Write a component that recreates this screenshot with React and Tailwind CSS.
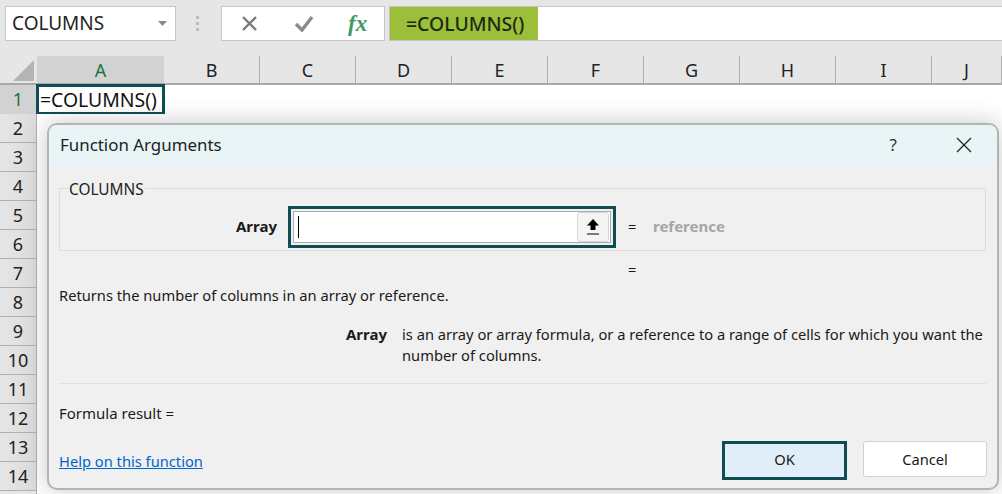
import React from 'react';

const columns = [
  { label: 'A', width: 'w-[127px]', active: true },
  { label: 'B', width: 'w-[96px]' },
  { label: 'C', width: 'w-[96px]' },
  { label: 'D', width: 'w-[96px]' },
  { label: 'E', width: 'w-[96px]' },
  { label: 'F', width: 'w-[96px]' },
  { label: 'G', width: 'w-[96px]' },
  { label: 'H', width: 'w-[96px]' },
  { label: 'I', width: 'w-[96px]' },
  { label: 'J', width: 'w-[70px]' },
];

const rows = [2, 3, 4, 5, 6, 7, 8, 9, 10, 11, 12, 13, 14];

const FormulaBar = () => (
  <div className="flex h-[56px] shrink-0 items-start bg-[#e6e6e6] pt-[6px]">
    <div className="ml-[5px] flex h-[35px] w-[171px] items-center justify-between border border-[#c6c6c6] bg-white pl-[6px] pr-[8px]">
      <span className="text-[19px] text-[#222]">COLUMNS</span>
      <svg width="9" height="5" viewBox="0 0 9 5"><path d="M0 0h9L4.5 5z" fill="#8a8a8a" /></svg>
    </div>
    <div className="ml-[20px] mr-[22px] flex h-[35px] flex-col justify-center gap-[3px]">
      <div className="h-[3px] w-[3px] bg-[#bdbdbd]" />
      <div className="h-[3px] w-[3px] bg-[#bdbdbd]" />
      <div className="h-[3px] w-[3px] bg-[#bdbdbd]" />
    </div>
    <div className="flex h-[35px] w-[164px] items-center border border-[#c6c6c6] bg-white">
      <svg className="ml-[19px]" width="17" height="17" viewBox="0 0 17 17">
        <path d="M2 2l13 13M15 2L2 15" stroke="#7a7a7a" strokeWidth="2.4" fill="none" />
      </svg>
      <svg className="ml-[36px]" width="20" height="17" viewBox="0 0 20 17">
        <path d="M2 9l6 6L18 2" stroke="#8a8a8a" strokeWidth="3.4" fill="none" />
      </svg>
      <span className="ml-[34px] font-['Liberation_Serif',serif] text-[23px] font-bold italic leading-[28px] text-[#3f9a66]">fx</span>
    </div>
    <div className="ml-[4px] flex h-[35px] flex-1 border border-r-0 border-[#c6c6c6] bg-white">
      <div className="flex w-[148px] items-center bg-[#9bbf3b] pl-[16px] text-[19.4px] font-medium text-[#1d2a10]">=COLUMNS()</div>
    </div>
  </div>
);

const ColumnHeaders = () => (
  <div className="flex h-[29px] shrink-0 border-b-2 border-[#a8a8a8] bg-[#e6e6e6]">
    <div className="flex w-[37px] items-end justify-end pb-[2px] pr-[3px]">
      <svg width="21" height="21" viewBox="0 0 21 21"><path d="M21 0v21H0z" fill="#b4b4b4" /></svg>
    </div>
    {columns.map((col) => (
      <div
        key={col.label}
        className={`${col.width} flex h-[27px] shrink-0 items-end justify-center text-[18px] leading-[25px] ${
          col.active ? 'bg-[#d2d2d2] text-[#217346]' : 'border-r border-[#b0b0b0] text-[#222]'
        }`}
      >
        {col.label}
      </div>
    ))}
  </div>
);

const Sheet = () => (
  <div className="flex flex-1 flex-col">
    <div className="flex h-[29px] shrink-0 bg-white">
      <div className="flex w-[37px] items-center justify-center border-r border-[#b0b0b0] bg-[#d2d2d2] text-[18px] text-[#217346]">1</div>
      <div className="-ml-px -mt-px h-[31px] w-[129px] border-[3px] border-[#0f4c54] bg-white pl-px text-[19.4px] leading-[25px] text-[#111]">=COLUMNS()</div>
    </div>
    {rows.map((n) => (
      <div key={n} className="flex h-[29px] shrink-0 bg-white">
        <div className="flex w-[37px] items-center justify-center border-b border-r border-[#b0b0b0] bg-gradient-to-r from-[#e6e6e6] to-[#dcdcdc] text-[18px] text-[#222]">{n}</div>
      </div>
    ))}
    <div className="w-[37px] flex-1 border-r border-[#b0b0b0] bg-[#e6e6e6]" />
  </div>
);

const Dialog = () => (
  <div className="absolute left-[47px] top-[123px] flex h-[367px] w-[952px] flex-col overflow-hidden rounded-[10px] border-2 border-[#b4b4b4] bg-[#f0f0f0] text-[14.7px] text-[#1a1a1a] shadow-[0_0_24px_rgba(0,0,0,0.22)]">
    <div className="flex h-[42px] shrink-0 items-center bg-[#e9f4f7] pb-[2px] pl-[11px]">
      <span className="flex-1 text-[16.9px] text-[#222]">Function Arguments</span>
      <span className="text-[17px] text-[#333]">?</span>
      <svg className="ml-[59px] mr-[25px]" width="16" height="16" viewBox="0 0 16 16">
        <path d="M1 1l14 14M15 1L1 15" stroke="#222" strokeWidth="1.3" fill="none" />
      </svg>
    </div>

    <div className="relative ml-[10px] mr-[11px] mt-[21px] h-[63px] shrink-0 border border-[#dcdcdc]">
      <span className="absolute -top-[9px] left-[8px] bg-[#f0f0f0] px-px text-[15.4px] leading-[20px] text-[#222]">COLUMNS</span>
      <div className="flex h-full items-center pt-[14px]">
        <span className="w-[217px] text-right text-[15px] font-bold">Array</span>
        <div className="ml-[11px] flex h-[42px] w-[328px] shrink-0 border-[3px] border-[#0f4c54] p-[2px]">
          <div className="flex flex-1 items-center justify-between border border-[#ababab] bg-white pl-[4px] pr-px">
            <div className="h-[22px] w-px bg-black" />
            <div className="flex h-[30px] w-[32px] items-center justify-center rounded-[3px] border border-[#d6d6d6] bg-[#f4f4f4]">
              <svg width="14" height="18" viewBox="0 0 14 18">
                <path d="M7 1L13 7.5H9.5V12H4.5V7.5H1z" fill="#000" />
                <path d="M1 16h12" stroke="#000" strokeWidth="1.2" />
              </svg>
            </div>
          </div>
        </div>
        <span className="ml-[12px] w-[25px] shrink-0">=</span>
        <span className="text-[15px] font-bold text-[#a6a6a6]">reference</span>
      </div>
    </div>

    <div className="ml-[579px] mt-[8px] h-[20px] shrink-0 leading-[20px]">=</div>
    <p className="ml-[10px] mt-[6px] h-[20px] shrink-0 leading-[20px]">Returns the number of columns in an array or reference.</p>

    <div className="mt-[19px] flex shrink-0">
      <span className="w-[338px] shrink-0 text-right text-[15px] font-bold leading-[21px]">Array</span>
      <p className="ml-[15px] w-[590px] leading-[21px]">is an array or array formula, or a reference to a range of cells for which you want the number of columns.</p>
    </div>

    <div className="ml-[10px] mr-[11px] mt-[17px] h-px shrink-0 bg-[#e0e0e0]" />
    <p className="ml-[10px] mt-[19px] shrink-0 text-[15px] leading-[20px]">Formula result =</p>

    <div className="ml-[10px] mr-[10px] mt-[18px] flex shrink-0 items-start">
      <a className="mt-[10px] flex-1 leading-[20px] text-[#0066cc] underline">Help on this function</a>
      <button className="h-[39px] w-[125px] border-[3px] border-[#0f4c54] bg-[#e0eef9] pb-[2px] text-[#1a1a1a]">OK</button>
      <button className="ml-[16px] h-[36px] w-[124px] rounded-[3px] border border-[#d0d0d0] bg-white text-[#1a1a1a]">Cancel</button>
    </div>
  </div>
);

export default function App() {
  return (
    <div className="relative flex h-[494px] w-[1002px] flex-col overflow-hidden bg-white font-['Noto_Sans',sans-serif]">
      <FormulaBar />
      <ColumnHeaders />
      <Sheet />
      <Dialog />
    </div>
  );
}
